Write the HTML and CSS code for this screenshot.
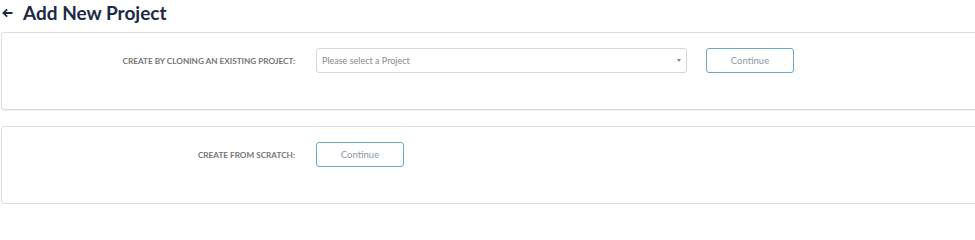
FILE: index.html
```html
<!DOCTYPE html>
<html lang="en">
<head>
<meta charset="utf-8">
<title>Add New Project</title>
<link rel="stylesheet" href="styles.css">
</head>
<body>
<header class="page-header">
  <span class="back-arrow">
    <svg width="11" height="10" viewBox="0 0 11 10"><path d="M10.5 5H1.8M5.2 1.3L1.4 5L5.2 8.7" fill="none" stroke="#1c2a44" stroke-width="1.8"/></svg>
  </span>
  <h1 class="page-title">Add New Project</h1>
</header>
<main class="cards">
  <section class="card">
    <div class="form-row">
      <label class="form-label">Create by cloning an existing project:</label>
      <div class="select">
        <span class="select-placeholder">Please select a Project</span>
        <span class="select-caret"></span>
      </div>
      <button class="btn">Continue</button>
    </div>
  </section>
  <section class="card">
    <div class="form-row">
      <label class="form-label">Create from scratch:</label>
      <button class="btn">Continue</button>
    </div>
  </section>
</main>
</body>
</html>
```
FILE: styles.css
```css
html, body {
  margin: 0;
  padding: 0;
  background: #fff;
  font-family: Lato, "Noto Sans", sans-serif;
}
.page-header {
  display: flex;
  align-items: center;
  height: 26px;
  padding: 0 0 6px 2px;
}
.back-arrow {
  display: flex;
  width: 21px;
}
.page-title {
  margin: 0;
  font-size: 19px;
  font-weight: 700;
  color: #1c2a44;
  line-height: 26px;
}
.cards {
  display: flex;
  flex-direction: column;
  gap: 16px;
  margin: 0 -10px 0 1px;
}
.card {
  border: 1px solid #dcdcdc;
  border-radius: 3px;
  box-shadow: 0 1px 1px rgba(0,0,0,0.08);
  padding: 15px 0 36px;
}
.form-row {
  display: flex;
  align-items: center;
  gap: 19px;
}
.form-label {
  width: 293px;
  margin-right: 2px;
  text-align: right;
  text-transform: uppercase;
  font-size: 8.2px;
  font-weight: 700;
  color: #767676;
}
.select {
  height: 23px;
  border: 1px solid #d6d6d6;
  border-radius: 3px;
  display: flex;
  align-items: center;
  justify-content: space-between;
  padding: 0 5px 0 5px;
  box-sizing: content-box;
  width: 359px;
}
.select-placeholder {
  font-size: 9px;
  color: #8a8a8a;
}
.select-caret {
  width: 0;
  height: 0;
  border-left: 2.5px solid transparent;
  border-right: 2.5px solid transparent;
  border-top: 3px solid #888;
}
.btn {
  width: 88px;
  height: 25px;
  border: 1px solid #6aa8cf;
  border-radius: 3px;
  background: #fff;
  font-family: Lato, "Noto Sans", sans-serif;
  font-size: 9.5px;
  color: #8b99a6;
  padding: 0;
}
```
